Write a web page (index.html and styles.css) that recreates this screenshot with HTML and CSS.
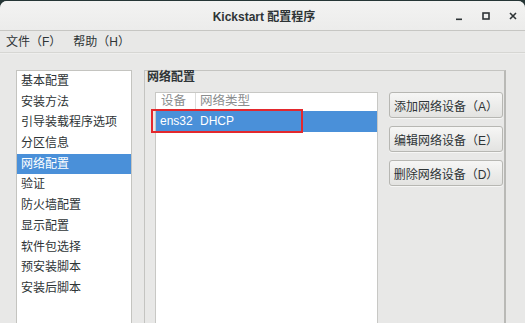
FILE: index.html
```html
<!DOCTYPE html>
<html lang="zh-CN">
<head>
<meta charset="utf-8">
<title>Kickstart 配置程序</title>
<link rel="stylesheet" href="styles.css">
</head>
<body>
<div class="window">
  <div class="titlebar">
    <div class="title">Kickstart 配置程序</div>
    <div class="controls">
      <svg class="ctl" width="10" height="10" viewBox="0 0 10 10"><rect x="2" y="7.5" width="6" height="1.6" fill="#2e3436"/></svg>
      <svg class="ctl" width="10" height="10" viewBox="0 0 10 10"><rect x="2" y="2" width="6" height="6" fill="none" stroke="#2e3436" stroke-width="1.6"/></svg>
      <svg class="ctl" width="10" height="10" viewBox="0 0 10 10"><path d="M2 2 L8 8 M8 2 L2 8" stroke="#2e3436" stroke-width="1.6"/></svg>
    </div>
  </div>
  <div class="menubar">
    <span class="menu">文件（F）</span>
    <span class="menu">帮助（H）</span>
  </div>
  <div class="content">
    <ul class="sidebar">
      <li>基本配置</li>
      <li>安装方法</li>
      <li>引导装载程序选项</li>
      <li>分区信息</li>
      <li class="selected">网络配置</li>
      <li>验证</li>
      <li>防火墙配置</li>
      <li>显示配置</li>
      <li>软件包选择</li>
      <li>预安装脚本</li>
      <li>安装后脚本</li>
    </ul>
    <div class="frame">
      <div class="frame-label">网络配置</div>
      <div class="frame-body">
        <div class="tree">
          <div class="tree-header">
            <div class="col1 hcell">设备</div>
            <div class="col2 hcell">网络类型</div>
          </div>
          <div class="tree-row selected">
            <div class="col1 cell">ens32</div>
            <div class="col2 cell">DHCP</div>
          </div>
        </div>
        <div class="buttons">
          <button class="btn">添加网络设备（A）</button>
          <button class="btn">编辑网络设备（E）</button>
          <button class="btn">删除网络设备（D）</button>
        </div>
      </div>
    </div>
  </div>
</div>
<div class="highlight"></div>
</body>
</html>
```
FILE: styles.css
```css
html, body {
  margin: 0;
  padding: 0;
}
body {
  width: 525px;
  height: 323px;
  overflow: hidden;
  background: #263636;
  font-family: "Liberation Sans", "Noto Sans CJK SC", sans-serif;
  font-size: 12px;
  color: #2e3436;
  position: relative;
}
.window {
  margin-top: 1px;
  height: 322px;
  background: #e8e8e7;
  border-radius: 7px 7px 0 0;
  overflow: hidden;
  display: flex;
  flex-direction: column;
}
.titlebar {
  height: 29px;
  flex: none;
  background: linear-gradient(#f3f3f2, #ececeb);
  border-bottom: 1px solid #c6c6c3;
  display: flex;
  align-items: center;
  justify-content: center;
  position: relative;
}
.title {
  font-weight: bold;
  font-size: 12px;
  color: #2e3436;
  padding-left: 3px;
}
.controls {
  position: absolute;
  right: 7px;
  top: 10px;
  display: flex;
  gap: 17px;
}
.ctl {
  display: block;
}
.menubar {
  height: 21px;
  flex: none;
  border-bottom: 1px solid #d6d6d3;
  display: flex;
  align-items: center;
  padding-left: 6px;
  gap: 12px;
  background: #e8e8e7;
}
.menu {
  font-size: 12px;
  line-height: 21px;
  padding-top: 2px;
}
.content {
  flex: 1;
  display: flex;
  padding: 16px 0 0 16px;
  gap: 12px;
  background: #e8e8e7;
  border-top: 1px solid #eeeeed;
}
.sidebar {
  list-style: none;
  margin: 0;
  padding: 0;
  width: 114px;
  height: 300px;
  flex: none;
  background: #ffffff;
  border: 1px solid #c4c4c0;
}
.sidebar li {
  height: 20.7px;
  line-height: 20.7px;
  padding-left: 4px;
  white-space: nowrap;
}
.sidebar li.selected {
  background: #4a90d9;
  color: #ffffff;
}
.frame {
  width: 359px;
  height: 300px;
  flex: none;
  border: 1px solid #c4c4c1;
  border-right: 2px solid #b9b9b6;
  display: flex;
  flex-direction: column;
}
.frame-label {
  height: 21px;
  line-height: 13px;
  padding-left: 2px;
  font-weight: bold;
}
.frame-body {
  display: flex;
  padding-left: 10px;
  gap: 11px;
}
.tree {
  width: 221px;
  height: 260px;
  flex: none;
  background: #ffffff;
  border: 1px solid #c8c8c5;
}
.tree-header, .tree-row {
  display: flex;
}
.tree-header {
  height: 18px;
  color: #8a8d8e;
}
.hcell {
  line-height: 17px;
  height: 18px;
  font-size: 12.5px;
}
.col1 {
  width: 40px;
  padding-left: 5px;
  box-sizing: border-box;
}
.tree-header .col1 {
  border-right: 1px solid #dcdcda;
}
.col2 {
  padding-left: 4px;
}
.tree-row {
  height: 21px;
  line-height: 21px;
}
.tree-row .col1 {
  padding-left: 4px;
}
.tree-row.selected {
  background: #4a90d9;
  color: #ffffff;
}
.buttons {
  display: flex;
  flex-direction: column;
  gap: 8px;
}
.btn {
  width: 114px;
  height: 26px;
  padding: 0;
  font-family: "Liberation Sans", "Noto Sans CJK SC", sans-serif;
  font-size: 12px;
  color: #2e3436;
  background: linear-gradient(#f6f6f5, #e3e3e1);
  border: 1px solid #b7b7b3;
  border-radius: 3px;
  box-shadow: 0 1px 0 rgba(255,255,255,0.6);
  text-align: center;
}
.highlight {
  position: absolute;
  left: 151px;
  top: 109px;
  width: 152px;
  height: 24px;
  box-sizing: border-box;
  border: 2px solid #e3282d;
}
```
